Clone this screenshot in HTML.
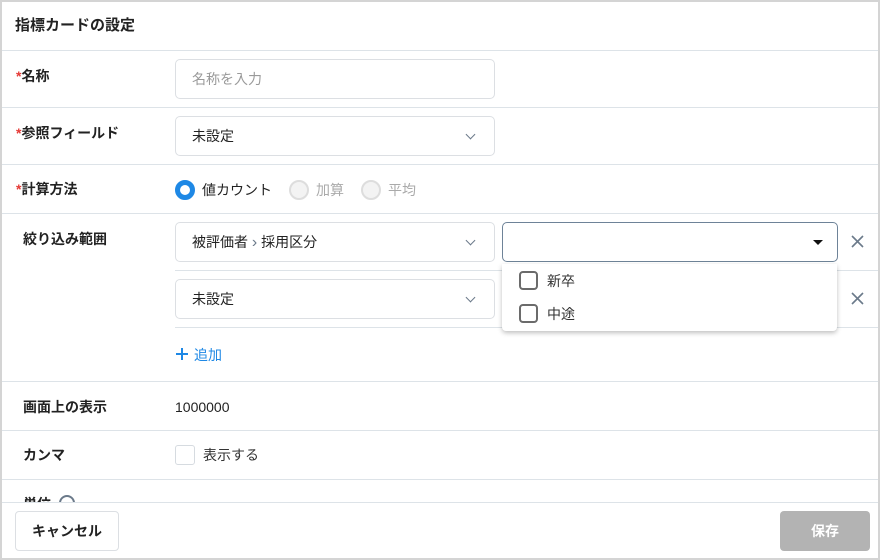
<!DOCTYPE html>
<html><head><meta charset="utf-8"><style>
*{box-sizing:border-box;margin:0;padding:0}
body{width:880px;height:560px;background:#fff;font-family:"Liberation Sans","Noto Sans CJK JP",sans-serif;font-size:14px;color:#222;position:relative;overflow:hidden}
.frame{position:absolute;left:0;top:0;width:880px;height:560px;border:2px solid #d4d4d4}
.a{position:absolute}
.hl{position:absolute;height:1px;background:#dde3e8}
.lbl{position:absolute;font-weight:bold;font-size:14px;line-height:20px}
.req{color:#e53935}
.box{position:absolute;border:1px solid #dcdfe3;border-radius:5px;background:#fff;height:40px;padding-left:16px;line-height:38px;font-size:14px}
.chev{position:absolute;right:20px;top:14px;width:7px;height:7px;border-right:1.8px solid #6b7a8a;border-bottom:1.8px solid #6b7a8a;transform:rotate(45deg)}
.radio{position:absolute;width:20px;height:20px;border-radius:50%}
.cb{position:absolute;width:19px;height:19px;border:2px solid #6b6b6b;border-radius:4px}
</style></head><body>
<div class="frame"></div>
<div class="lbl" style="left:15px;top:16px;font-size:15px">指標カードの設定</div>
<div class="hl" style="left:2px;right:2px;top:50px"></div>
<div class="lbl" style="left:16px;top:66px"><span class="req">*</span>名称</div>
<div class="box" style="left:175px;top:59px;width:320px;color:#9a9a9a">名称を入力</div>
<div class="hl" style="left:2px;right:2px;top:107px"></div>
<div class="lbl" style="left:16px;top:123px"><span class="req">*</span>参照フィールド</div>
<div class="box" style="left:175px;top:116px;width:320px">未設定<div class="chev"></div></div>
<div class="hl" style="left:2px;right:2px;top:164px"></div>
<div class="lbl" style="left:16px;top:179px"><span class="req">*</span>計算方法</div>
<div class="radio" style="left:175px;top:180px;border:5px solid #1e88e5"></div>
<div class="a" style="left:202px;top:180px;line-height:20px">値カウント</div>
<div class="radio" style="left:289px;top:180px;border:2px solid #ddd;background:#f3f3f3"></div>
<div class="a" style="left:316px;top:180px;line-height:20px;color:#aaa">加算</div>
<div class="radio" style="left:361px;top:180px;border:2px solid #ddd;background:#f3f3f3"></div>
<div class="a" style="left:388px;top:180px;line-height:20px;color:#aaa">平均</div>
<div class="hl" style="left:2px;right:2px;top:213px"></div>
<div class="lbl" style="left:23px;top:229px">絞り込み範囲</div>
<div class="box" style="left:175px;top:222px;width:320px">被評価者 <span style="color:#6b7a8a;font-size:16px">&#8250;</span> 採用区分<div class="chev"></div></div>
<div class="box" style="left:502px;top:222px;width:336px;border-color:#6e8398"><div class="a" style="left:310px;top:17px;width:0;height:0;border-left:5px solid transparent;border-right:5px solid transparent;border-top:5px solid #111"></div></div>
<svg class="a" style="left:851px;top:235px" width="13" height="13"><path d="M1 1L12 12M12 1L1 12" stroke="#6b7a8a" stroke-width="1.6"/></svg>
<div class="hl" style="left:175px;right:2px;top:270px"></div>
<div class="box" style="left:175px;top:279px;width:320px">未設定<div class="chev"></div></div>
<svg class="a" style="left:851px;top:292px" width="13" height="13"><path d="M1 1L12 12M12 1L1 12" stroke="#6b7a8a" stroke-width="1.6"/></svg>
<div class="hl" style="left:175px;right:2px;top:327px"></div>
<div class="a" style="left:502px;top:264px;width:335px;height:67px;background:#fff;border-radius:0 0 4px 4px;box-shadow:0 2px 5px rgba(0,0,0,.25)">
<div class="cb" style="left:17px;top:7px"></div><div class="a" style="left:45px;top:7px;line-height:20px;color:#333">新卒</div>
<div class="cb" style="left:17px;top:40px"></div><div class="a" style="left:45px;top:40px;line-height:20px;color:#333">中途</div>
</div>
<svg class="a" style="left:176px;top:348px" width="12" height="12"><path d="M6 0V12M0 6H12" stroke="#1e88e5" stroke-width="2"/></svg>
<div class="a" style="left:194px;top:345px;line-height:20px;color:#1e88e5">追加</div>
<div class="hl" style="left:2px;right:2px;top:381px"></div>
<div class="lbl" style="left:23px;top:397px">画面上の表示</div>
<div class="a" style="left:175px;top:397px;line-height:20px">1000000</div>
<div class="hl" style="left:2px;right:2px;top:430px"></div>
<div class="lbl" style="left:23px;top:445px">カンマ</div>
<div class="a" style="left:175px;top:445px;width:20px;height:20px;border:1.5px solid #d6dbe0;border-radius:3px"></div>
<div class="a" style="left:203px;top:445px;line-height:20px;color:#333">表示する</div>
<div class="hl" style="left:2px;right:2px;top:479px"></div>
<div class="lbl" style="left:23px;top:494px">単位</div>
<div class="a" style="left:59px;top:495px;width:16px;height:16px;border:2px solid #6b7a8a;border-radius:50%"></div>
<div class="a" style="left:2px;right:2px;top:502px;height:56px;background:#fff;border-top:1px solid #dde3e8"></div>
<div class="a" style="left:15px;top:511px;width:104px;height:40px;border:1px solid #dcdfe3;border-radius:4px;text-align:center;line-height:38px;font-weight:bold">キャンセル</div>
<div class="a" style="left:780px;top:511px;width:90px;height:40px;background:#b3b3b3;border-radius:4px;text-align:center;line-height:40px;font-weight:bold;color:#fff">保存</div>
</body></html>
